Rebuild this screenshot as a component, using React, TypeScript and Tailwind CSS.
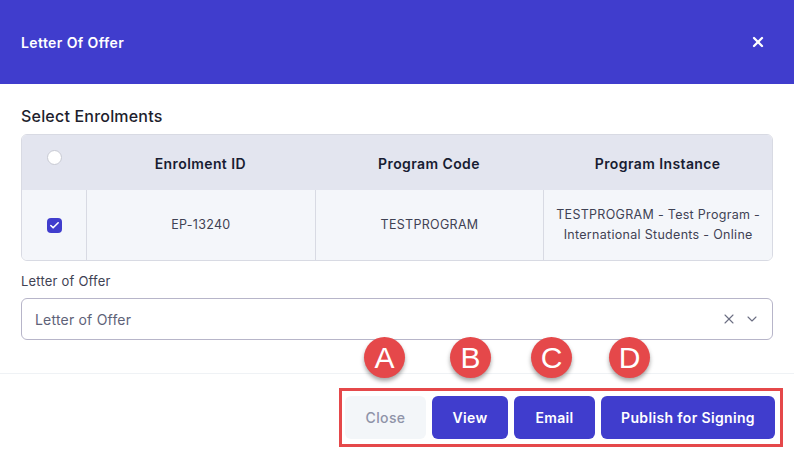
import { X, ChevronDown, Check } from "lucide-react";

const font = { fontFamily: "Inter, 'Noto Sans', sans-serif" };

function Marker({ letter, left }: { letter: string; left: string }) {
  return (
    <div
      className={`absolute top-[337px] ${left} w-[41px] h-[41px] rounded-full bg-[#e5484a] flex items-center justify-center text-white text-[30px] leading-none shadow-[0_3px_4px_rgba(0,0,0,0.35)] font-['Liberation_Sans',sans-serif]`}
    >
      {letter}
    </div>
  );
}

export default function App() {
  return (
    <div className="relative w-[794px] h-[460px] bg-white overflow-hidden" style={font}>
      {/* Header */}
      <div className="h-[84px] bg-[#403dcd] flex items-center justify-between pl-[21px] pr-[28px]">
        <h2 className="text-white text-[14px] font-semibold tracking-[0.4px]">Letter Of Offer</h2>
        <X className="w-[16px] h-[16px] text-white" strokeWidth={3.5} />
      </div>

      {/* Body */}
      <div className="px-[21px] pt-[23px]">
        <h3 className="text-[16px] font-medium text-[#1e1e2d] tracking-[0.2px] leading-[18px]">Select Enrolments</h3>

        <div className="mt-[9px] rounded-[6px] border border-[#d8dae3] overflow-hidden">
          <div className="grid grid-cols-[64px_1fr_1fr_1fr] h-[55px] bg-[#e3e5ef] text-[14px] font-semibold text-[#181c32] tracking-[0.4px]">
            <div className="flex justify-center pt-[15px]">
              <span className="w-[15px] h-[15px] rounded-full bg-white border border-[#c8cad3]" />
            </div>
            <div className="flex items-center justify-center pt-[1px]">Enrolment ID</div>
            <div className="flex items-center justify-center pt-[1px]">Program Code</div>
            <div className="flex items-center justify-center pt-[1px]">Program Instance</div>
          </div>
          <div className="grid grid-cols-[64px_1fr_1fr_1fr] h-[70px] bg-[#f4f6fa] text-[12.5px] text-[#3f4254] tracking-[0.3px]">
            <div className="flex items-center justify-center">
              <span className="w-[15px] h-[15px] rounded-[4px] bg-[#403dcd] flex items-center justify-center">
                <Check className="w-[11px] h-[11px] text-white" strokeWidth={3.5} />
              </span>
            </div>
            <div className="flex items-center justify-center border-l border-[#d8dae3]">EP-13240</div>
            <div className="flex items-center justify-center border-l border-[#d8dae3]">TESTPROGRAM</div>
            <div className="flex items-center justify-center border-l border-[#d8dae3] text-center leading-[20px]">
              TESTPROGRAM - Test Program -<br />International Students - Online
            </div>
          </div>
        </div>

        <label className="block mt-[12px] text-[13px] text-[#3f4254] leading-[16px] tracking-[0.2px]">Letter of Offer</label>
        <div className="mt-[9px] h-[42px] rounded-[6px] border border-[#b7b5c9] flex items-center pl-[13px] pr-[12px]">
          <span className="flex-1 text-[14px] text-[#5e6278] tracking-[0.2px]">Letter of Offer</span>
          <X className="w-[16px] h-[16px] text-[#6b6e82]" strokeWidth={1.6} />
          <ChevronDown className="w-[16px] h-[16px] text-[#6b6e82] ml-[7px]" strokeWidth={1.6} />
        </div>
      </div>

      {/* Footer */}
      <div className="mt-[33px] border-t border-[#eff2f5] flex justify-end pr-[11px] pt-[14px]">
        <div className="border-[3px] border-[#e5484a] pl-[3px] pr-[5px] py-[5px] flex gap-[6px] text-[14px] font-semibold tracking-[0.35px]">
          <button className="h-[43px] w-[81px] rounded-[6px] bg-[#f3f6f9] text-[#8f93a8] font-medium">Close</button>
          <button className="h-[43px] w-[76px] rounded-[6px] bg-[#403dcd] text-white">View</button>
          <button className="h-[43px] w-[81px] rounded-[6px] bg-[#403dcd] text-white">Email</button>
          <button className="h-[43px] w-[174px] rounded-[6px] bg-[#403dcd] text-white">Publish for Signing</button>
        </div>
      </div>

      <Marker letter="A" left="left-[364px]" />
      <Marker letter="B" left="left-[450px]" />
      <Marker letter="C" left="left-[531px]" />
      <Marker letter="D" left="left-[609px]" />
    </div>
  );
}
